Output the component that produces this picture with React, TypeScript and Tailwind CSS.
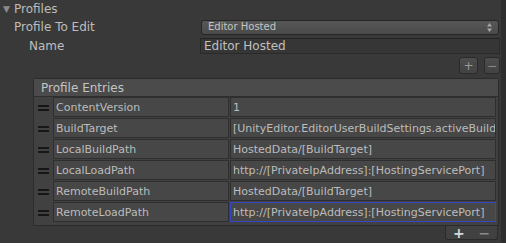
import React from 'react';

const entries: [string, string][] = [
  ['ContentVersion', '1'],
  ['BuildTarget', '[UnityEditor.EditorUserBuildSettings.activeBuildTarget]'],
  ['LocalBuildPath', 'HostedData/[BuildTarget]'],
  ['LocalLoadPath', 'http://[PrivateIpAddress]:[HostingServicePort]'],
  ['RemoteBuildPath', 'HostedData/[BuildTarget]'],
  ['RemoteLoadPath', 'http://[PrivateIpAddress]:[HostingServicePort]'],
];

const Handle: React.FC = () => (
  <div className="w-[19px] flex flex-col items-center justify-center gap-[2px]">
    <div className="w-[11px] h-[2px] bg-[#161616]" />
    <div className="w-[11px] h-[2px] bg-[#161616]" />
  </div>
);

const cell = 'h-[20px] bg-[#474747] border pl-[2px] pt-[4px] text-[#bcbcbc] overflow-hidden whitespace-nowrap';

const EntryRow: React.FC<{ name: string; value: string; selected?: boolean }> = ({ name, value, selected }) => (
  <div className="flex h-[21px]">
    <Handle />
    <div className={`${cell} w-[176px] border-[#2f2f2f]`}>{name}</div>
    <div className={selected ? `${cell} ml-[1px] w-[266px] border-[#3347c8]` : `${cell} ml-[1px] w-[266px] border-[#2f2f2f]`}>
      {value}
    </div>
  </div>
);

const App: React.FC = () => {
  return (
    <div className="w-[506px] h-[251px] flex flex-col bg-white text-[11px] leading-none" style={{ fontFamily: '"DejaVu Sans", sans-serif' }}>
      <div className="flex h-[243px]">
        <div className="w-[501px] bg-[#393939] flex flex-col text-[#bdbdbd]">
          {/* foldout */}
          <div className="h-[18px] flex items-center">
            <span className="ml-[3px] w-[10px] text-[9px] text-[#8c8c8c]">▼</span>
            <span className="ml-[1px] text-[12px]">Profiles</span>
          </div>
          <div className="h-[18px] flex items-center">
            <span className="ml-[14px] w-[187px] text-[12px]">Profile To Edit</span>
            <div className="w-[298px] h-[15px] rounded-[3px] border border-[#262626] bg-gradient-to-b from-[#575757] to-[#4a4a4a] flex items-center justify-between pl-[6px] pr-[6px]">
              <span className="text-[10px] text-[#c4c4c4]">Editor Hosted</span>
              <svg width="5" height="9" viewBox="0 0 5 9">
                <path d="M2.5 0 L5 3.5 L0 3.5 Z" fill="#a8a8a8" />
                <path d="M2.5 9 L5 5.5 L0 5.5 Z" fill="#a8a8a8" />
              </svg>
            </div>
          </div>
          <div className="h-[18px] flex items-center mt-[1px]">
            <span className="ml-[29px] w-[171px] text-[12px]">Name</span>
            <div className="w-[300px] h-[16px] bg-[#363636] border border-[#2a2a2a] border-t-[#222] pl-[3px] flex items-center text-[12px] text-[#c0c0c0]">
              Editor Hosted
            </div>
          </div>
          <div className="h-[21px] flex items-center justify-end pr-[1px] gap-[6px]">
            <div className="w-[19px] h-[17px] rounded-[3px] border border-[#2a2a2a] bg-gradient-to-b from-[#4d4d4d] to-[#434343] flex items-center justify-center text-[12px] text-[#9a9a9a]">+</div>
            <div className="w-[16px] h-[17px] rounded-[3px] border border-[#2a2a2a] bg-gradient-to-b from-[#4d4d4d] to-[#434343] flex items-center justify-center text-[12px] text-[#8a8a8a]">−</div>
          </div>
          {/* entries list */}
          <div className="ml-[33px] mt-[2px] w-[466px] rounded-t-[3px] border border-[#2b2b2b] bg-[#414141] flex flex-col">
            <div className="h-[18px] bg-[#4b4b4b] border-b border-[#2e2e2e] flex items-center pl-[7px] text-[12px] text-[#c4c4c4]">
              Profile Entries
            </div>
            <div className="pb-[2px]">
              {entries.map(([k, v], i) => (
                <EntryRow key={k} name={k} value={v} selected={i === entries.length - 1} />
              ))}
            </div>
          </div>
          <div className="ml-[445px] w-[53px] h-[14px] rounded-b-[3px] border border-t-0 border-[#2b2b2b] bg-[#414141] flex items-center justify-around text-[14px] font-bold">
            <span className="text-[#d8d8d8]">+</span>
            <span className="text-[#8a8a8a]">−</span>
          </div>
        </div>
        <div className="w-[5px] bg-[#2e2e2e]" />
      </div>
    </div>
  );
};

export default App;
